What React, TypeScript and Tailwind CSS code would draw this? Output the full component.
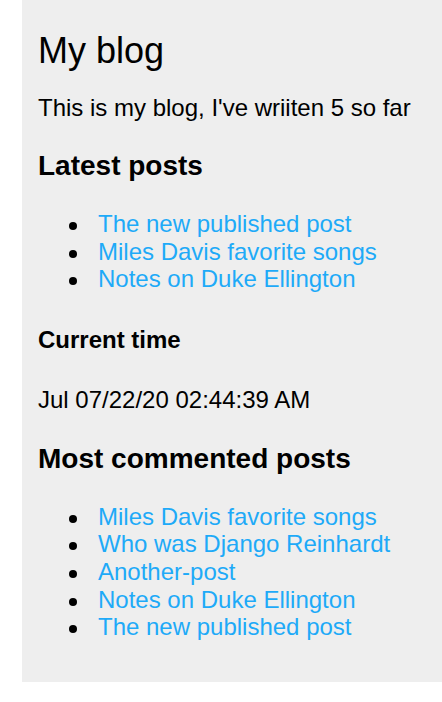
import React from 'react';

const latest = ['The new published post', 'Miles Davis favorite songs', 'Notes on Duke Ellington'];
const mostCommented = [
  'Miles Davis favorite songs',
  'Who was Django Reinhardt',
  'Another-post',
  'Notes on Duke Ellington',
  'The new published post',
];

const PostList: React.FC<{ items: string[]; className?: string }> = ({ items, className }) => (
  <ul className={`pl-[31px] text-[24px] leading-[27.6px] ${className ?? ''}`}>
    {items.map((title) => (
      <li key={title} className="flex items-start">
        <span className="mt-[12px] mr-[21px] h-2 w-2 shrink-0 rounded-full bg-black" />
        <a href="#" className="text-[#1eaaf8] no-underline">
          {title}
        </a>
      </li>
    ))}
  </ul>
);

const App: React.FC = () => {
  return (
    <div className="min-h-[702px] bg-white font-['Liberation_Sans',Arial,sans-serif] text-black">
      <aside className="ml-[22px] bg-[#eeeeee] pl-4 pt-[30px] pb-[41px]">
        <h1 className="text-[36px] leading-[41px] font-normal">My blog</h1>
        <p className="mt-[23px] text-[24px] leading-[28px]">This is my blog, I've wriiten 5 so far</p>

        <h2 className="mt-[28px] text-[28px] leading-[32px] font-bold">Latest posts</h2>
        <PostList items={latest} className="mt-[28px]" />

        <h3 className="mt-[33px] text-[24px] leading-[28px] font-bold">Current time</h3>
        <p className="mt-[32px] text-[24px] leading-[28px]">Jul 07/22/20 02:44:39 AM</p>

        <h2 className="mt-[29px] text-[28px] leading-[32px] font-bold">Most commented posts</h2>
        <PostList items={mostCommented} className="mt-[28px]" />
      </aside>
    </div>
  );
};

export default App;
